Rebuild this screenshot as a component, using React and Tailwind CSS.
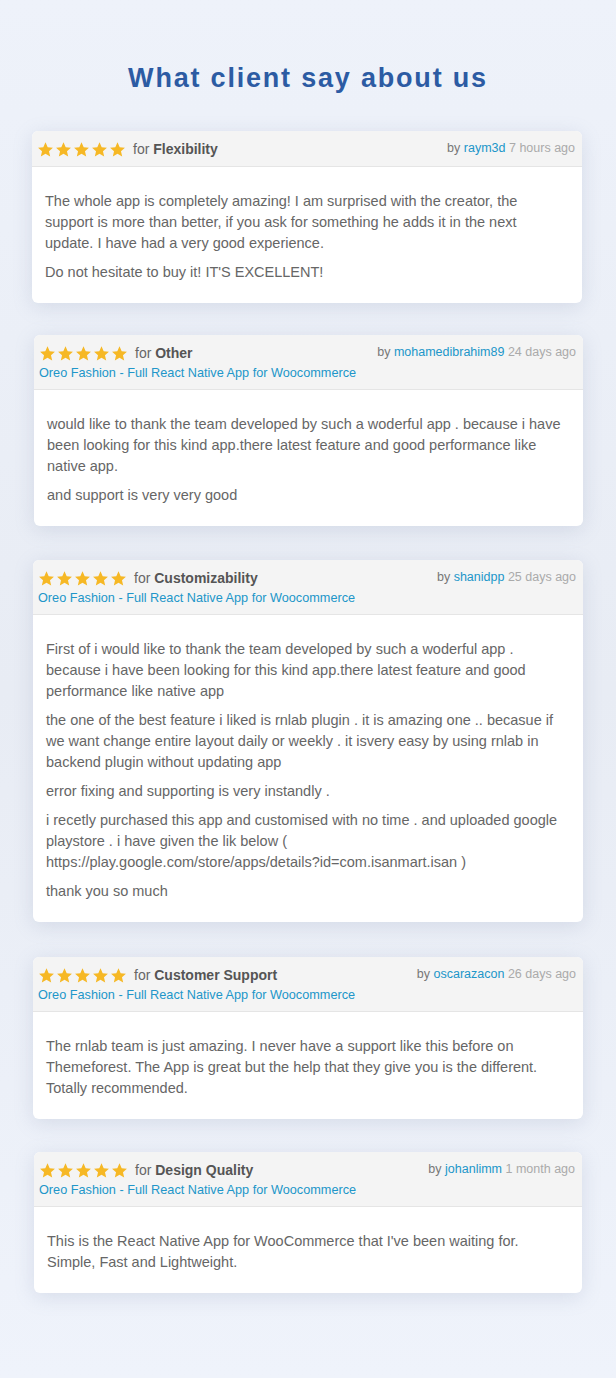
import React from 'react';

const reviews = [
  {
    box: 'ml-[32px] w-[550px]',
    topic: 'Flexibility',
    user: 'raym3d',
    when: '7 hours ago',
    product: null,
    paragraphs: [
      [
        'The whole app is completely amazing! I am surprised with the creator, the',
        'support is more than better, if you ask for something he adds it in the next',
        'update. I have had a very good experience.',
      ],
      ["Do not hesitate to buy it! IT'S EXCELLENT!"],
    ],
  },
  {
    box: 'mt-[32px] ml-[34px] w-[549px]',
    topic: 'Other',
    user: 'mohamedibrahim89',
    when: '24 days ago',
    product: 'Oreo Fashion - Full React Native App for Woocommerce',
    paragraphs: [
      [
        'would like to thank the team developed by such a woderful app . because i have',
        'been looking for this kind app.there latest feature and good performance like',
        'native app.',
      ],
      ['and support is very very good'],
    ],
  },
  {
    box: 'mt-[34px] ml-[33px] w-[550px]',
    topic: 'Customizability',
    user: 'shanidpp',
    when: '25 days ago',
    product: 'Oreo Fashion - Full React Native App for Woocommerce',
    paragraphs: [
      [
        'First of i would like to thank the team developed by such a woderful app .',
        'because i have been looking for this kind app.there latest feature and good',
        'performance like native app',
      ],
      [
        'the one of the best feature i liked is rnlab plugin . it is amazing one .. becasue if',
        'we want change entire layout daily or weekly . it isvery easy by using rnlab in',
        'backend plugin without updating app',
      ],
      ['error fixing and supporting is very instandly .'],
      [
        'i recetly purchased this app and customised with no time . and uploaded google',
        'playstore . i have given the lik below (',
        'https://play.google.com/store/apps/details?id=com.isanmart.isan )',
      ],
      ['thank you so much'],
    ],
  },
  {
    box: 'mt-[35px] ml-[33px] w-[550px]',
    topic: 'Customer Support',
    user: 'oscarazacon',
    when: '26 days ago',
    product: 'Oreo Fashion - Full React Native App for Woocommerce',
    paragraphs: [
      [
        'The rnlab team is just amazing. I never have a support like this before on',
        'Themeforest. The App is great but the help that they give you is the different.',
        'Totally recommended.',
      ],
    ],
  },
  {
    box: 'mt-[33px] ml-[34px] w-[548px]',
    topic: 'Design Quality',
    user: 'johanlimm',
    when: '1 month ago',
    product: 'Oreo Fashion - Full React Native App for Woocommerce',
    paragraphs: [
      [
        "This is the React Native App for WooCommerce that I've been waiting for.",
        'Simple, Fast and Lightweight.',
      ],
    ],
  },
];

const Star = () => (
  <svg viewBox="0 0 24 24" className="w-[17px] h-[17px]">
    <path
      d="M12 1.8l3.1 6.9 7.4.7-5.6 5 1.7 7.4L12 17.9l-6.6 3.9 1.7-7.4-5.6-5 7.4-.7z"
      fill="#f6b825"
    />
  </svg>
);

const ReviewCard = ({ review }) => (
  <div
    className={`${review.box} bg-white rounded-[6px] overflow-hidden shadow-[0_4px_20px_rgba(120,135,170,0.2)]`}
  >
    {/* header */}
    <div className="bg-[#f4f4f4] border-b border-[#e5e5e5] pl-[5px] pr-[7px] pt-[8px] pb-[7px] flex justify-between">
      <div>
        <div className="flex items-center h-[20px]">
          <div className="flex gap-[1px]">
            <Star />
            <Star />
            <Star />
            <Star />
            <Star />
          </div>
          <span className="ml-[7px] text-[14px] text-[#666]">
            for <span className="font-bold text-[#555]">{review.topic}</span>
          </span>
        </div>
        {review.product && (
          <div className="mt-[1px] text-[12.7px] leading-[18px] text-[#2196c9]">
            {review.product}
          </div>
        )}
      </div>
      <div className="text-[12.5px] leading-[18px] text-[#777] whitespace-nowrap">
        by <span className="text-[#2196c9]">{review.user}</span>{' '}
        <span className="text-[#aaa]">{review.when}</span>
      </div>
    </div>

    {/* body */}
    <div className="px-[13px] pt-[24px] pb-[20px] text-[14.5px] leading-[21px] text-[#666]">
      {review.paragraphs.map((lines, i) => (
        <p key={i} className={i > 0 ? 'mt-[8px]' : ''}>
          {lines.map((line, j) => (
            <span key={j} className="block whitespace-nowrap">
              {line}
            </span>
          ))}
        </p>
      ))}
    </div>
  </div>
);

const App = () => {
  return (
    <div
      className="min-h-[1378px] w-full bg-gradient-to-b from-[#eef2fa] via-[#e8ecf4] to-[#eff3fb] pt-[58px] pb-[80px]"
      style={{ fontFamily: '"Liberation Sans", Arial, sans-serif' }}
    >
      <h2 className="text-center text-[27px] leading-[40px] font-bold tracking-[1.8px] text-[#2c5ba3]">
        What client say about us
      </h2>

      <div className="mt-[33px] flex flex-col">
        {reviews.map((r) => (
          <ReviewCard key={r.user} review={r} />
        ))}
      </div>
    </div>
  );
};

export default App;
